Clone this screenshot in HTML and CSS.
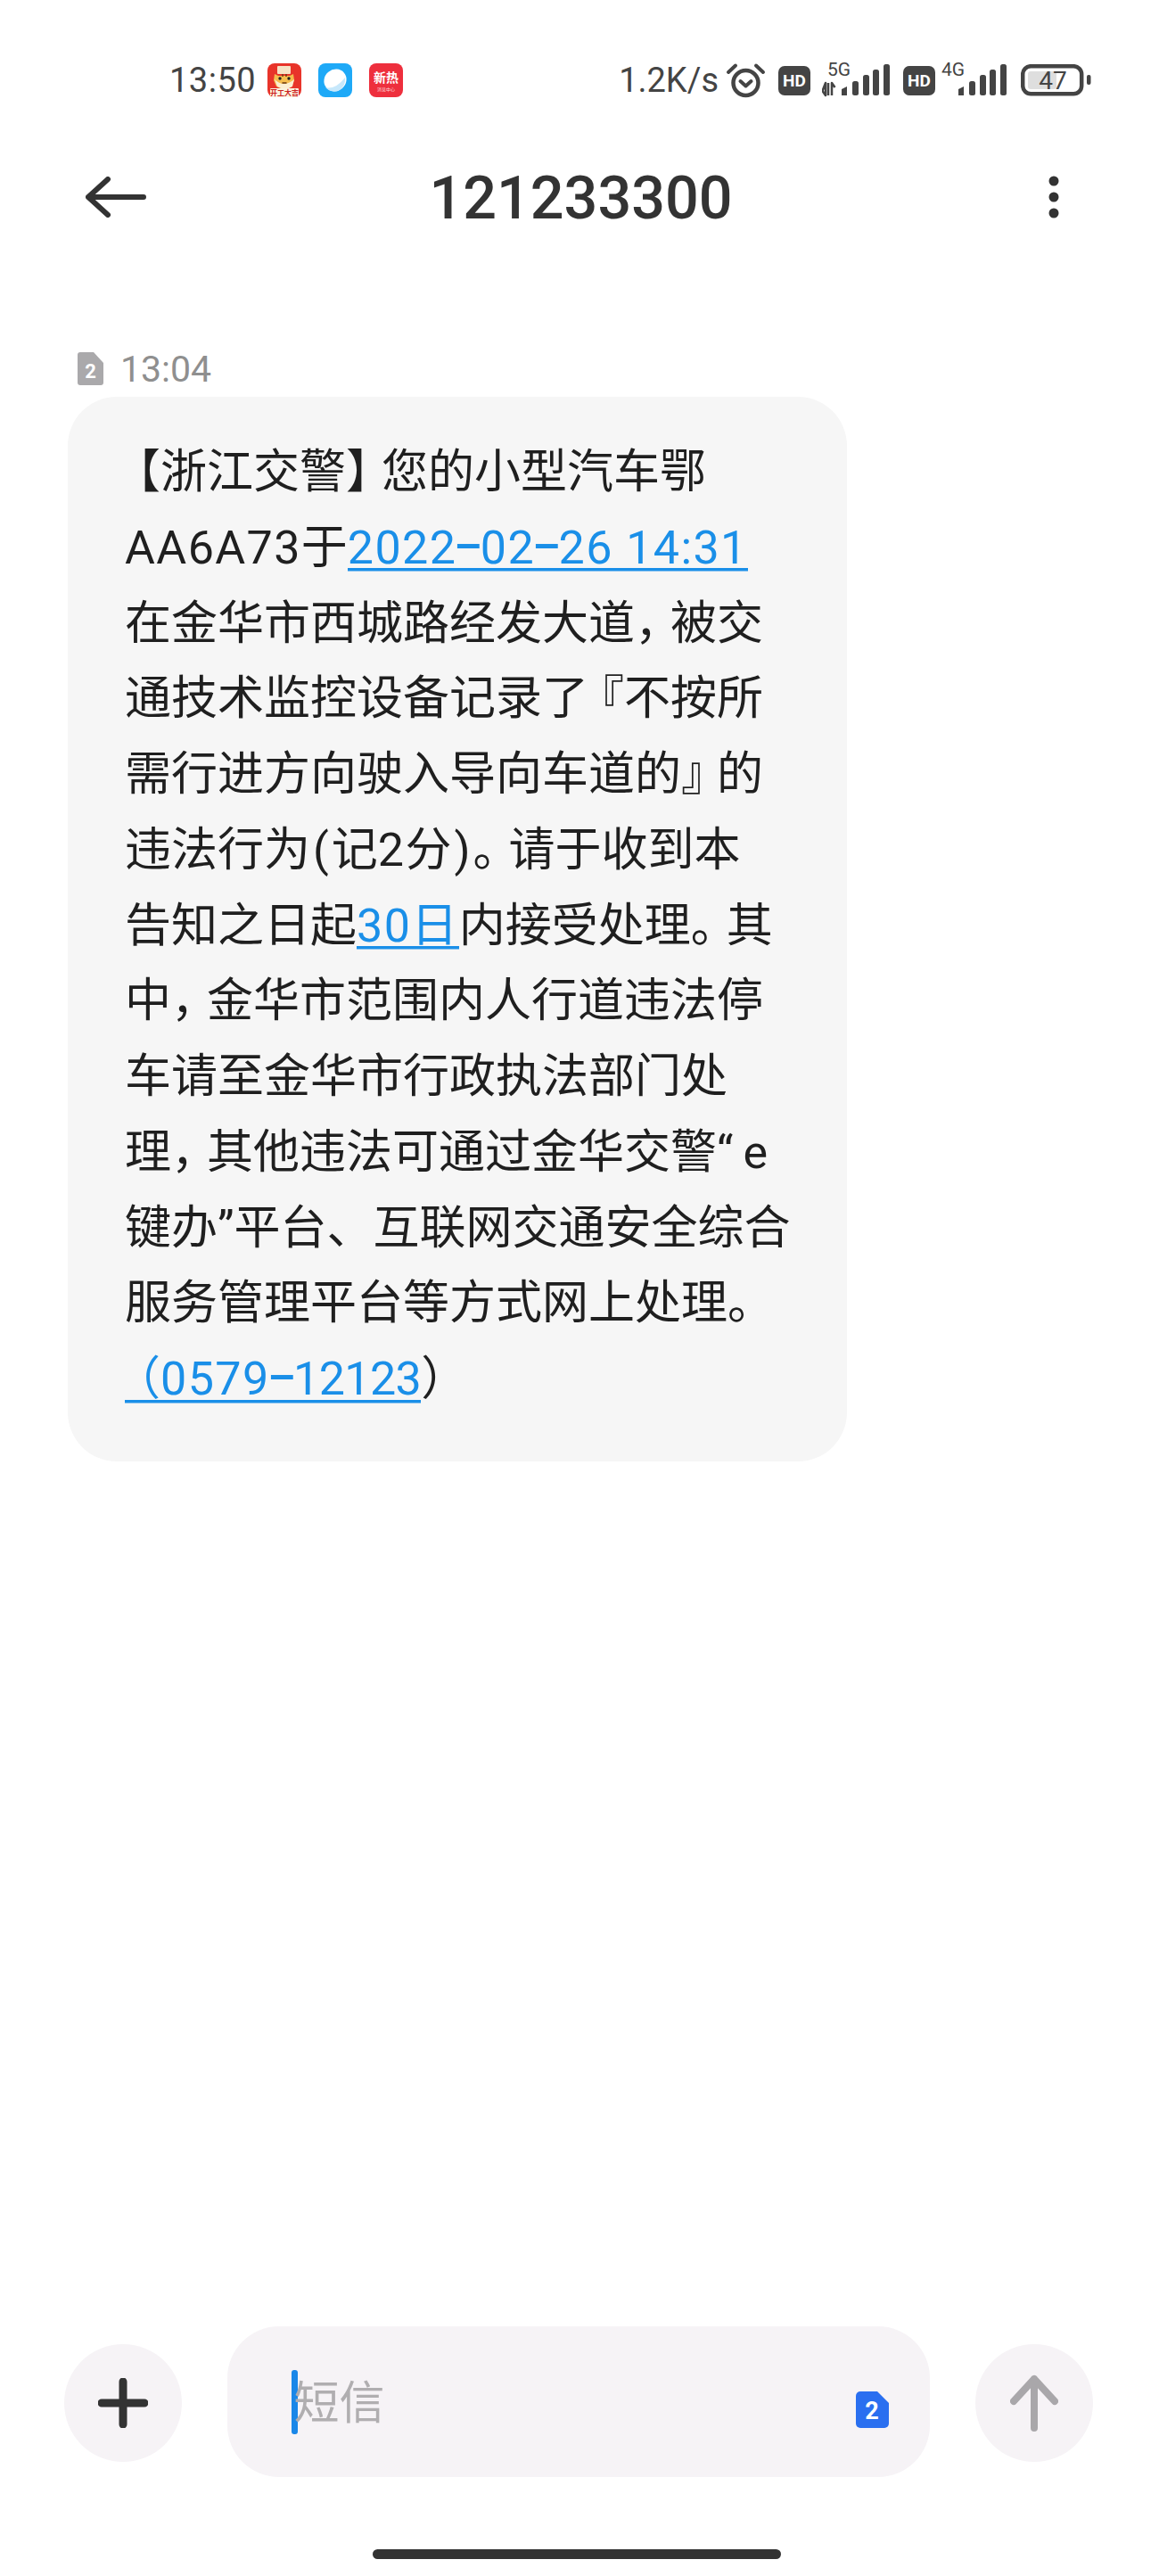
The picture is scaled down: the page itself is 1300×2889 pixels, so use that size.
FILE: index.html
```html
<!DOCTYPE html>
<html lang="zh-CN">
<head>
<meta charset="utf-8">
<title>121233300</title>
<link rel="stylesheet" href="styles.css">
</head>
<body>
<div class="page">
  <div class="statusbar">
    <div class="status-left">
      <span class="clock">13:50</span>
      <svg class="app-icon" viewBox="0 0 38 38">
        <rect width="38" height="38" rx="8" fill="#e8342a"/>
        <rect x="11" y="3" width="15" height="9" rx="1" fill="#f6e3c6"/>
        <path d="M8 12l4 2h13l4-2 1 7-3 7q-8 5-17 0l-3-7z" fill="#f6bd4e"/>
        <path d="M8 18q10 10 22 0l-2 8q-8 5-17 0z" fill="#fbeed2"/>
        <circle cx="14" cy="17" r="1.7" fill="#222"/><circle cx="24" cy="17" r="1.7" fill="#222"/>
        <path d="M17 12v3M21 12v3M16.5 22h5" stroke="#6b3a12" stroke-width="1.4"/>
        <rect x="3" y="28" width="32" height="10" rx="1" fill="#fbf3df"/>
        <text class="tiger-text" x="19" y="36" text-anchor="middle">开工大吉</text>
      </svg>
      <svg class="app-icon" viewBox="0 0 38 38">
        <rect width="38" height="38" rx="8" fill="#1ea9f7"/>
        <ellipse cx="19" cy="19" rx="13" ry="12" transform="rotate(-40 19 19)" fill="#fff"/>
        <path d="M8 27q11 3 22-11q1 11-8 15q-8 2-14-4z" fill="#c7e8fb"/>
      </svg>
      <svg class="app-icon" viewBox="0 0 38 38">
        <rect width="38" height="38" rx="8" fill="#ee2f3d"/>
        <text class="hot-big" x="19" y="21" text-anchor="middle">新热</text>
        <text class="hot-small" x="19" y="31" text-anchor="middle">消息中心</text>
      </svg>
    </div>
    <div class="status-right">
      <span class="speed">1.2K/s</span>
      <svg class="alarm" viewBox="0 0 45 40">
        <circle cx="22.5" cy="23" r="14" fill="none" stroke="#444" stroke-width="4.5"/>
        <path d="M16.5 21l6 5.500 6-5.500" fill="none" stroke="#444" stroke-width="4" stroke-linecap="round" stroke-linejoin="round"/>
        <path d="M3 11L11 3.500M42 11L34 3.500" stroke="#444" stroke-width="4" stroke-linecap="round"/>
      </svg>
      <span class="hd hd-first">HD</span>
      <svg class="signal-five" viewBox="0 -4 76 46">
        <text class="net" x="6" y="14">5G</text>
        <path d="M4 22v14l-3.500-5zM7 22v14M11 36V22l3.500 5" fill="none" stroke="#444" stroke-width="2.500" stroke-linejoin="round"/>
        <path d="M22 36v-7l6-3v10z" fill="#444"/>
        <rect x="34" y="20" width="7" height="16" rx="2.500" fill="#444"/>
        <rect x="46" y="13" width="7" height="23" rx="2.500" fill="#444"/>
        <rect x="57" y="7" width="7" height="29" rx="2.500" fill="#444"/>
        <rect x="69" y="1" width="7" height="35" rx="2.500" fill="#444"/>
      </svg>
      <span class="hd hd-second">HD</span>
      <svg class="signal-four" viewBox="0 -4 73 46">
        <text class="net" x="0" y="14">4G</text>
        <path d="M19 36v-7l6-3v10z" fill="#444"/>
        <rect x="31" y="20" width="7" height="16" rx="2.500" fill="#444"/>
        <rect x="43" y="13" width="7" height="23" rx="2.500" fill="#444"/>
        <rect x="54" y="7" width="7" height="29" rx="2.500" fill="#444"/>
        <rect x="66" y="1" width="7" height="35" rx="2.500" fill="#444"/>
      </svg>
      <svg class="battery" viewBox="0 0 79 36">
        <rect x="2.200" y="2.200" width="66" height="31" rx="9" fill="none" stroke="#444" stroke-width="4.500"/>
        <rect x="8" y="8" width="32" height="20" rx="3" fill="#dedede"/>
        <rect x="74" y="12" width="4.500" height="11" rx="2" fill="#444"/>
        <text class="batt-num" x="36" y="28" text-anchor="middle">47</text>
      </svg>
    </div>
  </div>

  <header class="titlebar">
    <svg class="back" viewBox="0 0 68 46">
      <path d="M25 3L3 23l22 20M3 23h62" fill="none" stroke="#333" stroke-width="6" stroke-linecap="round" stroke-linejoin="round"/>
    </svg>
    <h1 class="title">121233300</h1>
    <svg class="more" viewBox="0 0 44 50">
      <circle cx="22" cy="7" r="5.500" fill="#333"/>
      <circle cx="22" cy="25" r="5.500" fill="#333"/>
      <circle cx="22" cy="43" r="5.500" fill="#333"/>
    </svg>
  </header>

  <main class="thread">
    <div class="meta">
      <svg class="sim-grey" viewBox="0 0 29 37">
        <path d="M3 0h15l11 12v22a3 3 0 0 1-3 3H3a3 3 0 0 1-3-3V3a3 3 0 0 1 3-3z" fill="#aaa9ab"/>
        <text class="sim-num" x="14.500" y="29" text-anchor="middle">2</text>
      </svg>
      <span class="meta-time">13:04</span>
    </div>
    <div class="bubble"><span class="po">【</span>浙江交警<span class="pc">】</span>您的小型汽车鄂<br><span class="latin">AA6A73</span>于<a class="link">2022<span class="dash">-</span>02<span class="dash">-</span>26 14:31</a><br>在金华市西城路经发大道<span class="pc">，</span>被交<br>通技术监控设备记录了<span class="po">『</span>不按所<br>需行进方向驶入导向车道的<span class="pc">』</span>的<br>违法行为<span class="paren">(</span>记<span class="latin">2</span>分<span class="paren">)</span><span class="pc">。</span>请于收到本<br>告知之日起<a class="link">30日</a>内接受处理<span class="pc">。</span>其<br>中<span class="pc">，</span>金华市范围内人行道违法停<br>车请至金华市行政执法部门处<br>理<span class="pc">，</span>其他违法可通过金华交警<span class="quote">“</span>e<br>键办”平台、互联网交通安全综合<br>服务管理平台等方式网上处理。<br><a class="link"><span class="po">（</span>0579<span class="dash">-</span><span class="tight">12123</span></a><span class="halt">）</span></div>
  </main>

  <footer class="composer">
    <button class="round-btn">
      <svg class="plus" viewBox="0 0 56 56">
        <path d="M28 4v48M4 28h48" stroke="#333" stroke-width="9" stroke-linecap="round"/>
      </svg>
    </button>
    <div class="input">
      <span class="caret"></span>
      <span class="placeholder">短信</span>
      <svg class="sim-blue" viewBox="0 0 37 41">
        <path d="M5 0h19l13 13v23a5 5 0 0 1-5 5H5a5 5 0 0 1-5-5V5a5 5 0 0 1 5-5z" fill="#2a6ff0"/>
        <text class="sim-num-blue" x="18" y="31" text-anchor="middle">2</text>
      </svg>
    </div>
    <button class="round-btn">
      <svg class="send" viewBox="0 0 54 64">
        <path d="M27 60V5M4 30L27 5l23 25" fill="none" stroke="#a9a7aa" stroke-width="8" stroke-linecap="round" stroke-linejoin="round"/>
      </svg>
    </button>
  </footer>
  <div class="homebar"></div>
</div>
</body>
</html>
```
FILE: styles.css
```css
* { box-sizing: border-box; }
html, body { margin: 0; padding: 0; background: #fff; }
body { font-family: Roboto, "Noto Sans CJK SC", sans-serif; }
.page { width: 1300px; height: 2889px; display: flex; flex-direction: column; overflow: hidden; }

.statusbar { height: 180px; display: flex; align-items: center; justify-content: space-between; padding: 0 76px 0 190px; color: #444; }
.status-left, .status-right { display: flex; align-items: center; }
.clock { font-size: 38px; width: 110px; letter-spacing: 0.5px; }
.app-icon { width: 38px; height: 38px; margin-right: 19px; }
.status-left .app-icon:last-child { margin-right: 0; }
.tiger-text { font-size: 8px; font-weight: 700; fill: #c22; }
.hot-big { font-size: 14px; font-weight: 700; fill: #fff; }
.hot-small { font-size: 5px; fill: #ffd7da; }
.speed { font-size: 38px; margin-right: 8px; }
.alarm { width: 45px; height: 40px; margin-right: 14px; }
.hd { width: 36px; height: 33px; background: #444; color: #fff; border-radius: 7px; font-size: 19px; font-weight: 700; display: flex; align-items: center; justify-content: center; }
.hd-first { margin-right: 13px; }
.signal-five { width: 76px; height: 46px; margin-right: 15px; }
.hd-second { margin-right: 7px; }
.signal-four { width: 73px; height: 46px; margin-right: 16px; }
.net { font-size: 21px; fill: #444; }
.battery { width: 79px; height: 36px; }
.batt-num { font-size: 28px; fill: #444; }

.titlebar { height: 80px; display: grid; grid-template-columns: 1fr auto 1fr; align-items: center; padding: 0 96px; }
.back { width: 68px; height: 46px; }
.title { margin: 0; font-size: 66.500px; font-weight: 500; color: #333; line-height: 80px; padding: 2px 0 0 3px; }
.more { width: 44px; height: 50px; justify-self: end; }

.thread { flex: 1; padding: 135px 0 0 76px; }
.meta { height: 37px; margin-left: 11px; margin-bottom: 13px; display: flex; align-items: center; }
.sim-grey { width: 29px; height: 37px; margin-right: 19px; }
.sim-num { font-size: 22px; font-weight: 700; fill: #fff; }
.meta-time { font-size: 41px; color: #8f8f8f; }
.bubble { width: 874px; padding: 43px 20px 49px 64px; background: #f6f6f6; border-radius: 55px; font-size: 52px; line-height: 84.750px; color: #1f1f1f; white-space: nowrap; }
.latin { letter-spacing: 1.400px; }
.po, .pc, .halt { font-feature-settings: "halt"; letter-spacing: 0; }
.po { padding-left: 14px; }
.pc { padding-right: 14px; }
.paren { padding: 0 3px; }
.quote { letter-spacing: 11px; }
.link { color: #1a8fe8; letter-spacing: 1.400px; background: linear-gradient(#1a8fe8, #1a8fe8) no-repeat 0 calc(100% - 4px) / 100% 3.500px; }
.dash { display: inline-block; width: 26.500px; letter-spacing: 0; text-align: center; transform: translateY(-4px) scale(2, 1.3); }
.tight { letter-spacing: -0.600px; }

.composer { height: 169px; display: flex; align-items: center; gap: 51px; padding-left: 72px; }
.round-btn { width: 132px; height: 132px; border: 0; padding: 0; margin-top: 3px; border-radius: 50%; background: #f6f3f6; display: flex; align-items: center; justify-content: center; }
.plus { width: 56px; height: 56px; }
.send { width: 54px; height: 64px; }
.input { width: 788px; height: 169px; background: #f6f3f6; border-radius: 58px; display: flex; align-items: center; padding-left: 72px; padding-right: 46px; }
.caret { width: 6.500px; height: 72px; background: #1a87e8; border-radius: 3px; margin-right: -4px; }
.placeholder { font-size: 51px; color: #b0aeb0; line-height: 60px; margin-top: 5px; }
.sim-blue { width: 37px; height: 41px; margin-left: auto; margin-top: 18px; }
.sim-num-blue { font-size: 27px; font-weight: 700; fill: #fff; }

.homebar { width: 458px; height: 11px; border-radius: 6px; background: #333; margin: 81px 0 19px 418px; }
```
